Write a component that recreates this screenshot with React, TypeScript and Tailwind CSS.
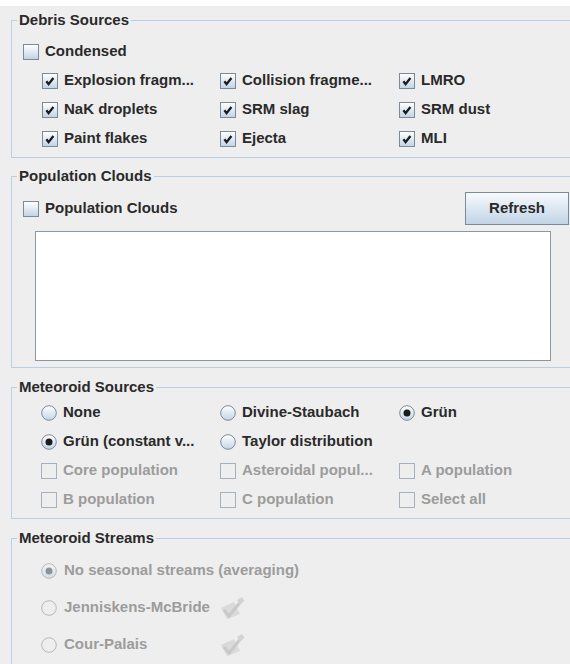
import React from "react";

type Mark = { label: string; checked?: boolean; disabled?: boolean };

function CheckBox({ checked = false, disabled = false }: { checked?: boolean; disabled?: boolean }) {
  if (disabled) {
    return <span className="block w-4 h-4 shrink-0 border border-[#a6b1bd] bg-[#eeeeee]" />;
  }
  return (
    <span className="flex w-4 h-4 shrink-0 border border-[#7b8a99] bg-linear-to-b from-white to-[#c3d4e6]">
      {checked && (
        <svg viewBox="0 0 14 14" className="w-full h-full">
          <polyline points="3.4,7.2 5.6,10.2 10.4,4" fill="none" stroke="#1c1c1c" strokeWidth="2.3" />
        </svg>
      )}
    </span>
  );
}

function Radio({ selected = false, disabled = false }: { selected?: boolean; disabled?: boolean }) {
  return (
    <svg viewBox="0 0 16 16" className="w-4 h-4 shrink-0">
      <defs>
        <linearGradient id="radio-on" x1="0" y1="0" x2="0" y2="1">
          <stop offset="0" stopColor="#ffffff" />
          <stop offset="1" stopColor="#c3d4e6" />
        </linearGradient>
        <linearGradient id="radio-dim" x1="0" y1="0" x2="0" y2="1">
          <stop offset="0" stopColor="#f4f6f8" />
          <stop offset="1" stopColor="#d5dde6" />
        </linearGradient>
      </defs>
      <circle
        cx="8"
        cy="8"
        r="7.3"
        fill={disabled ? (selected ? "url(#radio-dim)" : "#eeeeee") : "url(#radio-on)"}
        stroke={disabled ? "#b3b8be" : "#7b8a99"}
        strokeWidth="1"
      />
      {selected && <circle cx="8" cy="8" r="3.5" fill={disabled ? "#8e9499" : "#1c1c1c"} />}
    </svg>
  );
}

function Item({ label, checked, disabled, radio }: Mark & { radio?: boolean }) {
  return (
    <div className="flex items-center gap-[6px] h-[29px] whitespace-nowrap">
      {radio ? <Radio selected={checked} disabled={disabled} /> : <CheckBox checked={checked} disabled={disabled} />}
      <span className={disabled ? "text-[#9c9c9c]" : "text-[#2a2a2a]"}>{label}</span>
    </div>
  );
}

function Group({ title, className, children }: { title: string; className?: string; children: React.ReactNode }) {
  return (
    <fieldset className={"ml-[11px] w-[567px] border border-[#b8cfe5] " + (className ?? "")}>
      <legend className="ml-[5px] px-[2px] leading-[18px] text-[#2a2a2a]">{title}</legend>
      {children}
    </fieldset>
  );
}

// greyed-out "edit streams" glyph shown beside each disabled stream model
function StreamIcon() {
  return (
    <svg viewBox="0 0 26 22" className="w-[26px] h-[22px]">
      <path d="M2 11 L15 5 L21 17 L8 22 Z" fill="#dadada" />
      <path d="M5 13 L10 19 L23 3" fill="none" stroke="#c9c9c9" strokeWidth="3.2" />
      <path d="M18 3 L23 0 L25.5 3.5 L21 8 Z" fill="#d3d3d3" />
    </svg>
  );
}

const debris: Mark[] = [
  { label: "Explosion fragm...", checked: true },
  { label: "Collision fragme...", checked: true },
  { label: "LMRO", checked: true },
  { label: "NaK droplets", checked: true },
  { label: "SRM slag", checked: true },
  { label: "SRM dust", checked: true },
  { label: "Paint flakes", checked: true },
  { label: "Ejecta", checked: true },
  { label: "MLI", checked: true },
];

const meteoroidRadios: Mark[] = [
  { label: "None" },
  { label: "Divine-Staubach" },
  { label: "Grün", checked: true },
  { label: "Grün (constant v...", checked: true },
  { label: "Taylor distribution" },
];

const populations: Mark[] = [
  { label: "Core population", disabled: true },
  { label: "Asteroidal popul...", disabled: true },
  { label: "A population", disabled: true },
  { label: "B population", disabled: true },
  { label: "C population", disabled: true },
  { label: "Select all", disabled: true },
];

export default function App() {
  return (
    <div className="w-[570px] h-[664px] overflow-hidden bg-[#eeeeee] text-[15px] font-bold font-['Liberation_Sans',Arial,sans-serif] text-[#2a2a2a]">
      <div className="h-[6px] bg-white" />

      <Group title="Debris Sources" className="mt-[5px] pt-[8px] pb-[4px]">
        <div className="ml-[11px]">
          <Item label="Condensed" />
        </div>
        <div className="ml-[30px] grid grid-cols-[178px_179px_1fr]">
          {debris.map((d) => (
            <Item key={d.label} {...d} />
          ))}
        </div>
      </Group>

      <Group title="Population Clouds" className="mt-[9px] pt-[7px] pb-[6px]">
        <div className="flex items-center h-[33px] pl-[11px] pr-[8px]">
          <CheckBox />
          <span className="ml-[6px]">Population Clouds</span>
          <button className="ml-auto w-[104px] h-[33px] border border-[#7b8a99] bg-linear-to-b from-[#f7fafd] to-[#c2d4e7] text-[#2a2a2a] font-bold">
            Refresh
          </button>
        </div>
        <div className="ml-[23px] mt-[6px] w-[516px] h-[130px] border border-[#8a97a4] bg-white" />
      </Group>

      <Group title="Meteoroid Sources" className="mt-[10px] pt-[2px] pb-[4px]">
        <div className="ml-[29px] grid grid-cols-[179px_179px_1fr]">
          {meteoroidRadios.map((m) => (
            <Item key={m.label} radio {...m} />
          ))}
          <div />
          {populations.map((p) => (
            <Item key={p.label} {...p} />
          ))}
        </div>
      </Group>

      <Group title="Meteoroid Streams" className="mt-[10px] pt-[5px] pb-[20px]">
        <div className="ml-[29px] flex flex-col">
          <div className="flex items-center h-[37px] gap-[7px] text-[#9c9c9c]">
            <Radio selected disabled />
            <span>No seasonal streams (averaging)</span>
          </div>
          {["Jenniskens-McBride", "Cour-Palais"].map((s) => (
            <div key={s} className="flex items-center h-[37px] gap-[7px] text-[#9c9c9c]">
              <Radio disabled />
              <span className="w-[148px]">{s}</span>
              <StreamIcon />
            </div>
          ))}
        </div>
      </Group>
    </div>
  );
}
